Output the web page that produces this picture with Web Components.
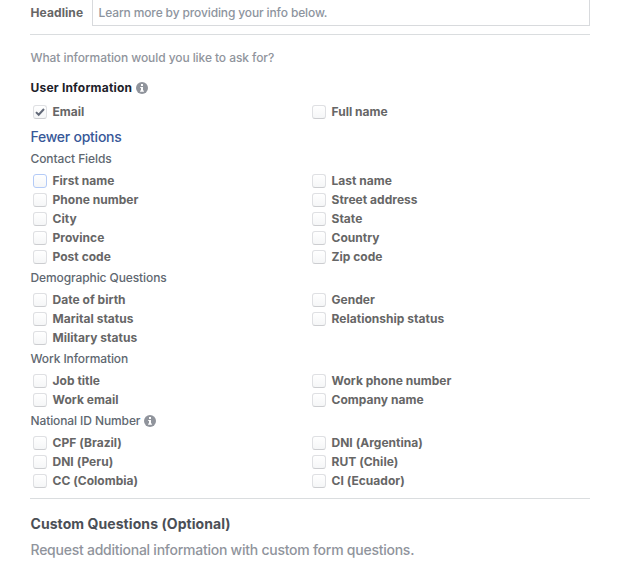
<!DOCTYPE html>
<html lang="en">
<head>
<meta charset="utf-8">
<title>Form questions</title>
<style>
  body {
    background: #ffffff;
    font-family: Inter, 'Liberation Sans', sans-serif;
    margin: 0;
    overflow: hidden;
  }
</style>
</head>
<body>
<lead-form></lead-form>

<script>
class LeadIcon extends HTMLElement {
  constructor() {
    super();

    this.attachShadow( {mode: 'open'} );
    this.shadowRoot.innerHTML = /* template */ `
      <style>
        :host {
          display: block;
          height: 12px;
          width: 12px;
        }

        svg {
          display: block;
        }
      </style>
      <svg width="12" height="12" viewBox="0 0 12 12">
        <circle cx="6" cy="6" r="6" fill="#90949c"/>
        <path d="M5 2h2v2H5zM4.2 5H7v3.6h.9v1.1H4.1V8.6H5V6h-.8z" fill="#ffffff"/>
      </svg>
    `;
  }
}

window.customElements.define( 'lead-icon', LeadIcon );

class LeadCheckbox extends HTMLElement {
  constructor() {
    super();

    const template = document.createElement( 'template' );
    template.innerHTML = /* template */ `
      <style>
        :host {
          align-items: center;
          box-sizing: border-box;
          color: #666666;
          display: flex;
          font-size: 12px;
          font-weight: 700;
          gap: 5.5px;
          height: 19px;
          letter-spacing: var( --label-spacing, 0 );
          line-height: 19px;
          padding-left: 3px;
          white-space: nowrap;
        }

        button {
          background: linear-gradient( #ffffff, #f5f6f7 );
          border: solid 1px #dfe0e3;
          border-bottom-color: #cccdd0;
          border-radius: 3px;
          box-sizing: border-box;
          flex: none;
          height: 14px;
          margin: 1px 0 0 0;
          padding: 0;
          width: 14px;
        }

        :host( [active] ) button {
          border-color: #b4cbf7;
        }

        svg {
          display: none;
        }

        :host( [checked] ) svg {
          display: block;
        }
      </style>
      <button type="button" role="checkbox" aria-checked="false">
        <svg width="12" height="12" viewBox="0 0 12 12">
          <path d="M2 6.1L4.7 8.7L10 3" fill="none" stroke="#626978" stroke-width="2"/>
        </svg>
      </button>
      <slot></slot>
    `;

    // Root
    this.attachShadow( {mode: 'open'} );
    this.shadowRoot.appendChild( template.content.cloneNode( true ) );

    // Events
    this.$button = this.shadowRoot.querySelector( 'button' );
    this.$button.addEventListener( 'click', () => this.toggleAttribute( 'checked' ) );
  }

  static get observedAttributes() {
    return ['checked'];
  }

  attributeChangedCallback( name, old, value ) {
    this.$button.setAttribute( 'aria-checked', value !== null );
  }
}

window.customElements.define( 'lead-checkbox', LeadCheckbox );

class LeadGroup extends HTMLElement {
  constructor() {
    super();

    this.attachShadow( {mode: 'open'} );
    this.shadowRoot.innerHTML = /* template */ `
      <style>
        :host {
          display: block;
        }

        header {
          align-items: center;
          color: #606770;
          display: flex;
          font-size: 12px;
          font-weight: 450;
          gap: 4px;
          height: 24px;
          letter-spacing: var( --header-spacing, 0 );
          line-height: 24px;
          padding-left: 0.5px;
        }

        :host( [primary] ) header {
          color: #1d2129;
          font-weight: 700;
          height: 28px;
          letter-spacing: 0.2px;
        }

        lead-icon {
          display: none;
        }

        :host( [info] ) lead-icon {
          display: block;
        }

        div {
          display: grid;
          grid-template-columns: 279px 1fr;
        }
      </style>
      <header><slot name="title"></slot><lead-icon></lead-icon></header>
      <div><slot></slot></div>
    `;
  }
}

window.customElements.define( 'lead-group', LeadGroup );

class LeadForm extends HTMLElement {
  constructor() {
    super();

    this.attachShadow( {mode: 'open'} );
    this.shadowRoot.innerHTML = /* template */ `
      <style>
        :host {
          --header-spacing: -0.1px;
          --label-spacing: 0.03px;
          box-sizing: border-box;
          display: flex;
          flex-direction: column;
          height: 563px;
          padding: 0 28px 0 30px;
        }

        p {
          margin: 0;
          white-space: nowrap;
        }

        hr {
          background: #dadddf;
          border: none;
          flex: none;
          height: 1px;
          margin: 0;
          width: 100%;
        }

        .headline {
          color: #666666;
          display: flex;
          font-size: 12px;
          height: 26px;
          line-height: 26px;
          margin-bottom: 8px;
        }

        .headline label {
          box-sizing: border-box;
          font-weight: 700;
          letter-spacing: 0.1px;
          padding-left: 0.5px;
          width: 62px;
        }

        .field {
          border: solid 1px #d8dadd;
          border-top: none;
          box-sizing: border-box;
          color: #8d949e;
          flex: 1;
          font-weight: 450;
          letter-spacing: -0.13px;
          padding-left: 5.5px;
        }

        .ask {
          color: #90949c;
          font-size: 12px;
          font-weight: 450;
          letter-spacing: -0.08px;
          line-height: 18px;
          padding: 14px 0 7px 0.5px;
        }

        .toggle {
          color: #385898;
          font-size: 14px;
          font-weight: 450;
          letter-spacing: -0.25px;
          line-height: 20px;
          padding: 6px 0 0 0.5px;
        }

        lead-group:last-of-type {
          margin-bottom: 8px;
        }

        .custom {
          color: #4b4f56;
          font-size: 14px;
          font-weight: 700;
          letter-spacing: 0.07px;
          line-height: 20px;
          padding: 15px 0 6px 0.5px;
        }

        .request {
          color: #90949c;
          font-size: 14px;
          font-weight: 450;
          letter-spacing: -0.25px;
          line-height: 20px;
          padding-left: 0.5px;
        }
      </style>
      <div class="headline">
        <label>Headline</label>
        <div class="field">Learn more by providing your info below.</div>
      </div>
      <hr>
      <p class="ask">What information would you like to ask for?</p>
      <lead-group primary info>
        <span slot="title">User Information</span>
        <lead-checkbox checked>Email</lead-checkbox>
        <lead-checkbox>Full name</lead-checkbox>
      </lead-group>
      <p class="toggle">Fewer options</p>
      <lead-group>
        <span slot="title">Contact Fields</span>
        <lead-checkbox active>First name</lead-checkbox>
        <lead-checkbox>Last name</lead-checkbox>
        <lead-checkbox>Phone number</lead-checkbox>
        <lead-checkbox>Street address</lead-checkbox>
        <lead-checkbox>City</lead-checkbox>
        <lead-checkbox>State</lead-checkbox>
        <lead-checkbox>Province</lead-checkbox>
        <lead-checkbox>Country</lead-checkbox>
        <lead-checkbox>Post code</lead-checkbox>
        <lead-checkbox>Zip code</lead-checkbox>
      </lead-group>
      <lead-group>
        <span slot="title">Demographic Questions</span>
        <lead-checkbox>Date of birth</lead-checkbox>
        <lead-checkbox>Gender</lead-checkbox>
        <lead-checkbox>Marital status</lead-checkbox>
        <lead-checkbox>Relationship status</lead-checkbox>
        <lead-checkbox>Military status</lead-checkbox>
      </lead-group>
      <lead-group>
        <span slot="title">Work Information</span>
        <lead-checkbox>Job title</lead-checkbox>
        <lead-checkbox>Work phone number</lead-checkbox>
        <lead-checkbox>Work email</lead-checkbox>
        <lead-checkbox>Company name</lead-checkbox>
      </lead-group>
      <lead-group info>
        <span slot="title">National ID Number</span>
        <lead-checkbox>CPF (Brazil)</lead-checkbox>
        <lead-checkbox>DNI (Argentina)</lead-checkbox>
        <lead-checkbox>DNI (Peru)</lead-checkbox>
        <lead-checkbox>RUT (Chile)</lead-checkbox>
        <lead-checkbox>CC (Colombia)</lead-checkbox>
        <lead-checkbox>CI (Ecuador)</lead-checkbox>
      </lead-group>
      <hr>
      <p class="custom">Custom Questions (Optional)</p>
      <p class="request">Request additional information with custom form questions.</p>
    `;
  }
}

window.customElements.define( 'lead-form', LeadForm );
</script>
</body>
</html>
